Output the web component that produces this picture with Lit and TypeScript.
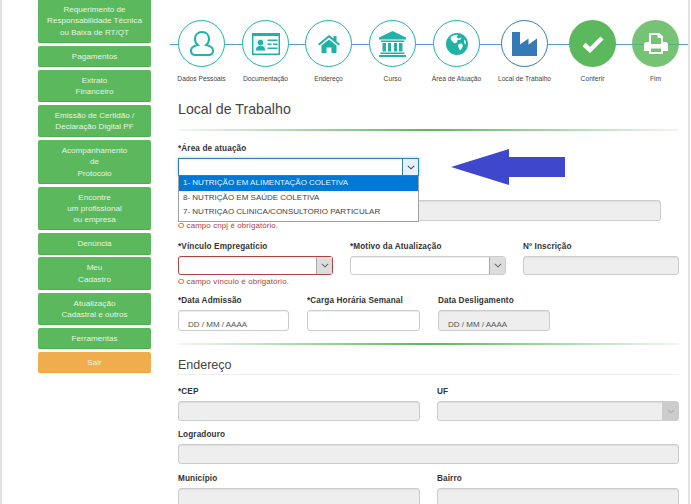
import { LitElement, html, css, svg } from "lit";
import { customElement } from "lit/decorators.js";

const menu: { lines: string[]; alt?: boolean }[] = [
  { lines: ["Requerimento de", "Responsabilidade Técnica", "ou Baixa de RT/QT"] },
  { lines: ["Pagamentos"] },
  { lines: ["Extrato", "Financeiro"] },
  { lines: ["Emissão de Certidão /", "Declaração Digital PF"] },
  { lines: ["Acompanhamento", "de", "Protocolo"] },
  { lines: ["Encontre", "um profissional", "ou empresa"] },
  { lines: ["Denúncia"] },
  { lines: ["Meu", "Cadastro"] },
  { lines: ["Atualização", "Cadastral e outros"] },
  { lines: ["Ferramentas"] },
  { lines: ["Sair"], alt: true },
];

const icons = {
  person: svg`<path d="M12 1c-4.200 0-7 3-7 7 0 2.700 1.100 4.700 2.900 6-3.500.7-6.900 1.700-6.900 5.500 0 2.800 1.700 4.500 4.500 4.500h13c2.800 0 4.500-1.700 4.500-4.500 0-3.800-3.400-4.800-6.900-5.500 1.800-1.300 2.900-3.300 2.900-6 0-4-2.800-7-7-7z" fill="none" stroke="#20b2a6" stroke-width="2"/>`,
  card: svg`<path fill="#20b2a6" fill-rule="evenodd" d="M0 0h28v22H0zM1.500 3v17.500h25V3z"/><rect x="3" y="6" width="11" height="12" fill="#20b2a6" opacity=".12"/><circle cx="8.500" cy="9.500" r="2.700" fill="#20b2a6"/><path d="M4 17.500c0-3.400 1.500-4.500 4.500-4.500s4.500 1.100 4.500 4.500z" fill="#20b2a6"/><path d="M15.500 6.500h10V8h-10zM15.500 10.500h4V12h-4zM21 10.500h4.500V12H21zM15.500 14.500h10V16h-10z" fill="#20b2a6"/>`,
  house: svg`<path fill="#20b2a6" d="M11 0 0 9l1.300 1.500L11 2.600l9.700 7.900L22 9l-3.500-2.800V1h-3v2.600zM3.500 10.500 11 4.500l7.500 6V18h-5v-5.500h-5V18h-5z"/>`,
  bank: svg`<path fill="#20b2a6" d="M13.500 0 0 6.500v2h27v-2zM2 9.500h23V11H2zM3.500 12h3.500v8.500H3.500zM9 12h3v8.500H9zM15 12h3v8.500h-3zM20 12h3.500v8.500H20zM1.500 21.500h24V23h-24zM0 24h27v2H0z"/>`,
  globe: svg`<circle cx="11" cy="11" r="11" fill="#20b2a6"/><path fill="#fff" d="M4.500 4.500c2-2 4.700-3 7.500-2.500L10.500 4l2 1.500 3-1-1 2-3 .5-.5 2.500-2.500 1L6.500 8.500 5 7zM12.500 11l3-.5 1.500 2-1 2.500-2 2.500-1-2-1-2.500zM18 6.500l2 2v3L18 10z"/>`,
  factory: svg`<path fill="#337ab7" d="M0 0h8v12.500l8.500-6v6L25 6.500V24H0z"/>`,
  check: svg`<path fill="none" stroke="#fff" stroke-width="4.500" d="M2 9.500l6 5.500L20 3"/>`,
  print: svg`<path fill="#fff" fill-rule="evenodd" d="M6 0h9.500L19 3.500V9h2.500C23 9 24 10 24 11.500V18h-5v3H5v-3H0v-6.500C0 10 1 9 2.500 9H5V0zM7 2v9h10V5h-3.500V2zM7 15.500V19h10v-3.500z"/>`,
};

const steps = [
  { label: "Dados Pessoais", icon: icons.person, box: [24, 25], gap: 0, tone: "teal" },
  { label: "Documentação", icon: icons.card, box: [28, 22], gap: 17, tone: "teal" },
  { label: "Endereço", icon: icons.house, box: [22, 18], gap: 16, tone: "teal" },
  { label: "Curso", icon: icons.bank, box: [27, 26], gap: 17, tone: "teal" },
  { label: "Área de Atuação", icon: icons.globe, box: [22, 22], gap: 17, tone: "teal" },
  { label: "Local de Trabalho", icon: icons.factory, box: [25, 24], gap: 21, tone: "blue" },
  { label: "Conferir", icon: icons.check, box: [22, 18], gap: 21, tone: "green" },
  { label: "Fim", icon: icons.print, box: [24, 21], gap: 16, tone: "light" },
];

const chevron = html`<svg class="chev" viewBox="0 0 10 6" width="8" height="5"><path d="M1 1l4 3.600L9 1" fill="none" stroke="currentColor" stroke-width="1.300"/></svg>`;

@customElement("app-root")
export class AppRoot extends LitElement {
  static styles = css`
    :host { display: block; width: 691px; height: 504px; overflow: hidden; background: #fff; font-family: "Liberation Sans", Arial, sans-serif; color: #333; }
    .page { display: flex; height: 504px; width: 690px; box-sizing: border-box; border-left: 2px solid #e2e2e2; border-right: 2px solid #e2e2e2; overflow: hidden; }
    .side { width: 113px; margin: -1px 0 0 36px; display: flex; flex-direction: column; gap: 2.800px; flex: none; }
    .btn { background: #5cb85c; border-bottom: 1px solid #4cae4c; box-sizing: border-box; border-radius: 2px; padding: 5px 2px 4px; text-align: center; color: #e6f4e6; font-size: 8.100px; line-height: 11.250px; }
    .btn.alt { background: #f0ad4e; border-bottom-color: #eea236; }
    .btn span { display: block; }
    main { width: 501px; margin-left: 27px; flex: none; position: relative; }
    .stepper { position: relative; display: flex; padding-top: 20px; height: 62px; }
    .track { position: absolute; left: -8px; right: -9px; top: 44px; height: 1px; background: #5b9bd5; }
    .step { width: 47px; flex: none; position: relative; display: flex; flex-direction: column; align-items: center; }
    .disc { width: 47px; height: 47px; box-sizing: border-box; border-radius: 50%; border: 1.800px solid #20b2a6; background: #fff; display: flex; align-items: center; justify-content: center; flex: none; }
    .disc.blue { border-color: #337ab7; }
    .disc.green { border: none; background: #5cb85c; }
    .disc.light { border: none; background: rgba(92,184,92,.84); }
    .step label { margin-top: 7px; font-size: 6.700px; line-height: 10px; white-space: nowrap; color: #444; }
    h2 { margin: 0; font-weight: 400; font-size: 14.200px; line-height: 18px; color: #444; }
    h2.first { margin-top: 18px; }
    h2.second { margin-top: 11px; font-size: 12.500px; }
    .rule { height: 2px; margin-top: 11px; background: linear-gradient(90deg, #f2f7f2 0%, #5cb85c 50%, #f2f7f2 100%); }
    .rule.mid { margin-top: 12px; }
    .rule.thin { height: 1px; margin-top: 0; background: #eee; }
    .lbl { display: block; font-size: 8.200px; font-weight: 700; line-height: 10px; letter-spacing: .12px; color: #333; white-space: nowrap; margin-bottom: 4px; }
    .ctl { box-sizing: border-box; border: 1px solid #ccc; border-radius: 3px; background: #fff; box-shadow: inset 0 1px 1px rgba(0,0,0,.07); display: flex; align-items: stretch; justify-content: flex-end; }
    .ctl.off { background: #eee; }
    .ctl.err { border-color: #a94442; }
    .ctl.date { font-size: 8px; color: #555; padding: 9px 0 0 9px; justify-content: flex-start; line-height: 10px; }
    .arrowbox { width: 15px; background: #ddd; border-left: 1px solid #aaa; color: #666; display: flex; align-items: center; justify-content: center; }
    .ctl.off .arrowbox { background: #ccc; color: #aaa; border-left-color: #ccc; }
    .h20 { height: 20px; }
    .h19 { height: 19px; }
    .h21 { height: 21px; }
    .err-text { font-size: 7.900px; line-height: 10px; color: #a94442; letter-spacing: .12px; }
    .err-text.below { margin-top: 2px; }
    .area { width: 241px; margin-top: 13px; position: relative; }
    .focus { height: 18px; box-sizing: border-box; border: 1px solid #2f7fb8; box-shadow: 0 0 3px rgba(102,175,233,.7); background: #fff; display: flex; justify-content: flex-end; }
    .focus .arrowbox { background: #e5f1fb; border-left: 1px solid #2f7fb8; color: #444; }
    .list { position: absolute; left: 0; top: 32px; width: 241px; box-sizing: border-box; background: #fff; border: 1px solid #a0a0a0; border-top: none; z-index: 2; font-size: 8px; color: #444; padding-bottom: 1px; }
    .list div { height: 14.500px; line-height: 14.500px; padding-left: 4px; white-space: nowrap; }
    .list div.sel { background: #0078d7; color: #e8f2fb; }
    .hidden-row { margin-top: 24px; height: 21px; width: 483px; }
    .r3 { display: grid; grid-template-columns: 155px 156px 156px; column-gap: 17px; margin-top: 11px; }
    .r4 { display: grid; grid-template-columns: 111px 113px 112px; column-gap: 18px; margin-top: 9px; }
    .r2 { display: grid; grid-template-columns: 242px 242px; column-gap: 17px; margin-top: 10px; }
    .r2.top { margin-top: 12px; }
    .full { margin-top: 9px; }
    .arrow { position: absolute; left: 273px; top: 149px; z-index: 3; }
    .chev { display: block; }
  `;

  private step(s: (typeof steps)[number]) {
    const [w, h] = s.box;
    return html`<div class="step" style="margin-left:${s.gap}px">
      <div class="disc ${s.tone}">
        <svg width=${w} height=${h} viewBox="0 0 ${w} ${h}">${s.icon}</svg>
      </div>
      <label>${s.label}</label>
    </div>`;
  }

  render() {
    return html`<div class="page">
      <nav class="side">
        ${menu.map((m) => html`<div class="btn ${m.alt ? "alt" : ""}">${m.lines.map((l) => html`<span>${l}</span>`)}</div>`)}
      </nav>
      <main>
        <div class="stepper">
          <div class="track"></div>
          ${steps.map((s) => this.step(s))}
        </div>
        <h2 class="first">Local de Trabalho</h2>
        <div class="rule"></div>

        <div class="area">
          <span class="lbl">*Área de atuação</span>
          <div class="focus"><div class="arrowbox">${chevron}</div></div>
          <div class="list">
            <div class="sel">1- NUTRIÇÃO EM ALIMENTAÇÃO COLETIVA</div>
            <div>8- NUTRIÇÃO EM SAÚDE COLETIVA</div>
            <div>7- NUTRIÇAO CLINICA/CONSULTORIO PARTICULAR</div>
          </div>
        </div>
        <div class="ctl off hidden-row"></div>
        <div class="err-text">O campo cnpj é obrigatório.</div>

        <div class="r3">
          <div>
            <span class="lbl">*Vínculo Empregatício</span>
            <div class="ctl err h19"><div class="arrowbox">${chevron}</div></div>
            <div class="err-text below">O campo vínculo é obrigatório.</div>
          </div>
          <div>
            <span class="lbl">*Motivo da Atualização</span>
            <div class="ctl h19"><div class="arrowbox">${chevron}</div></div>
          </div>
          <div>
            <span class="lbl">Nº Inscrição</span>
            <div class="ctl off h19"></div>
          </div>
        </div>

        <div class="r4">
          <div><span class="lbl">*Data Admissão</span><div class="ctl date h21">DD / MM / AAAA</div></div>
          <div><span class="lbl">*Carga Horária Semanal</span><div class="ctl h21"></div></div>
          <div><span class="lbl">Data Desligamento</span><div class="ctl off date h21">DD / MM / AAAA</div></div>
        </div>

        <div class="rule mid"></div>
        <h2 class="second">Endereço</h2>
        <div class="rule thin"></div>

        <div class="r2 top">
          <div><span class="lbl">*CEP</span><div class="ctl off h20"></div></div>
          <div><span class="lbl">UF</span><div class="ctl off h20"><div class="arrowbox">${chevron}</div></div></div>
        </div>
        <div class="full"><span class="lbl">Logradouro</span><div class="ctl off h20"></div></div>
        <div class="r2">
          <div><span class="lbl">Município</span><div class="ctl off h20"></div></div>
          <div><span class="lbl">Bairro</span><div class="ctl off h20"></div></div>
        </div>

        <svg class="arrow" width="115" height="36" viewBox="0 0 115 36"><path d="M0 18 58 0v8h56v20H58v8z" fill="#3f48cc"/></svg>
      </main>
    </div>`;
  }
}
